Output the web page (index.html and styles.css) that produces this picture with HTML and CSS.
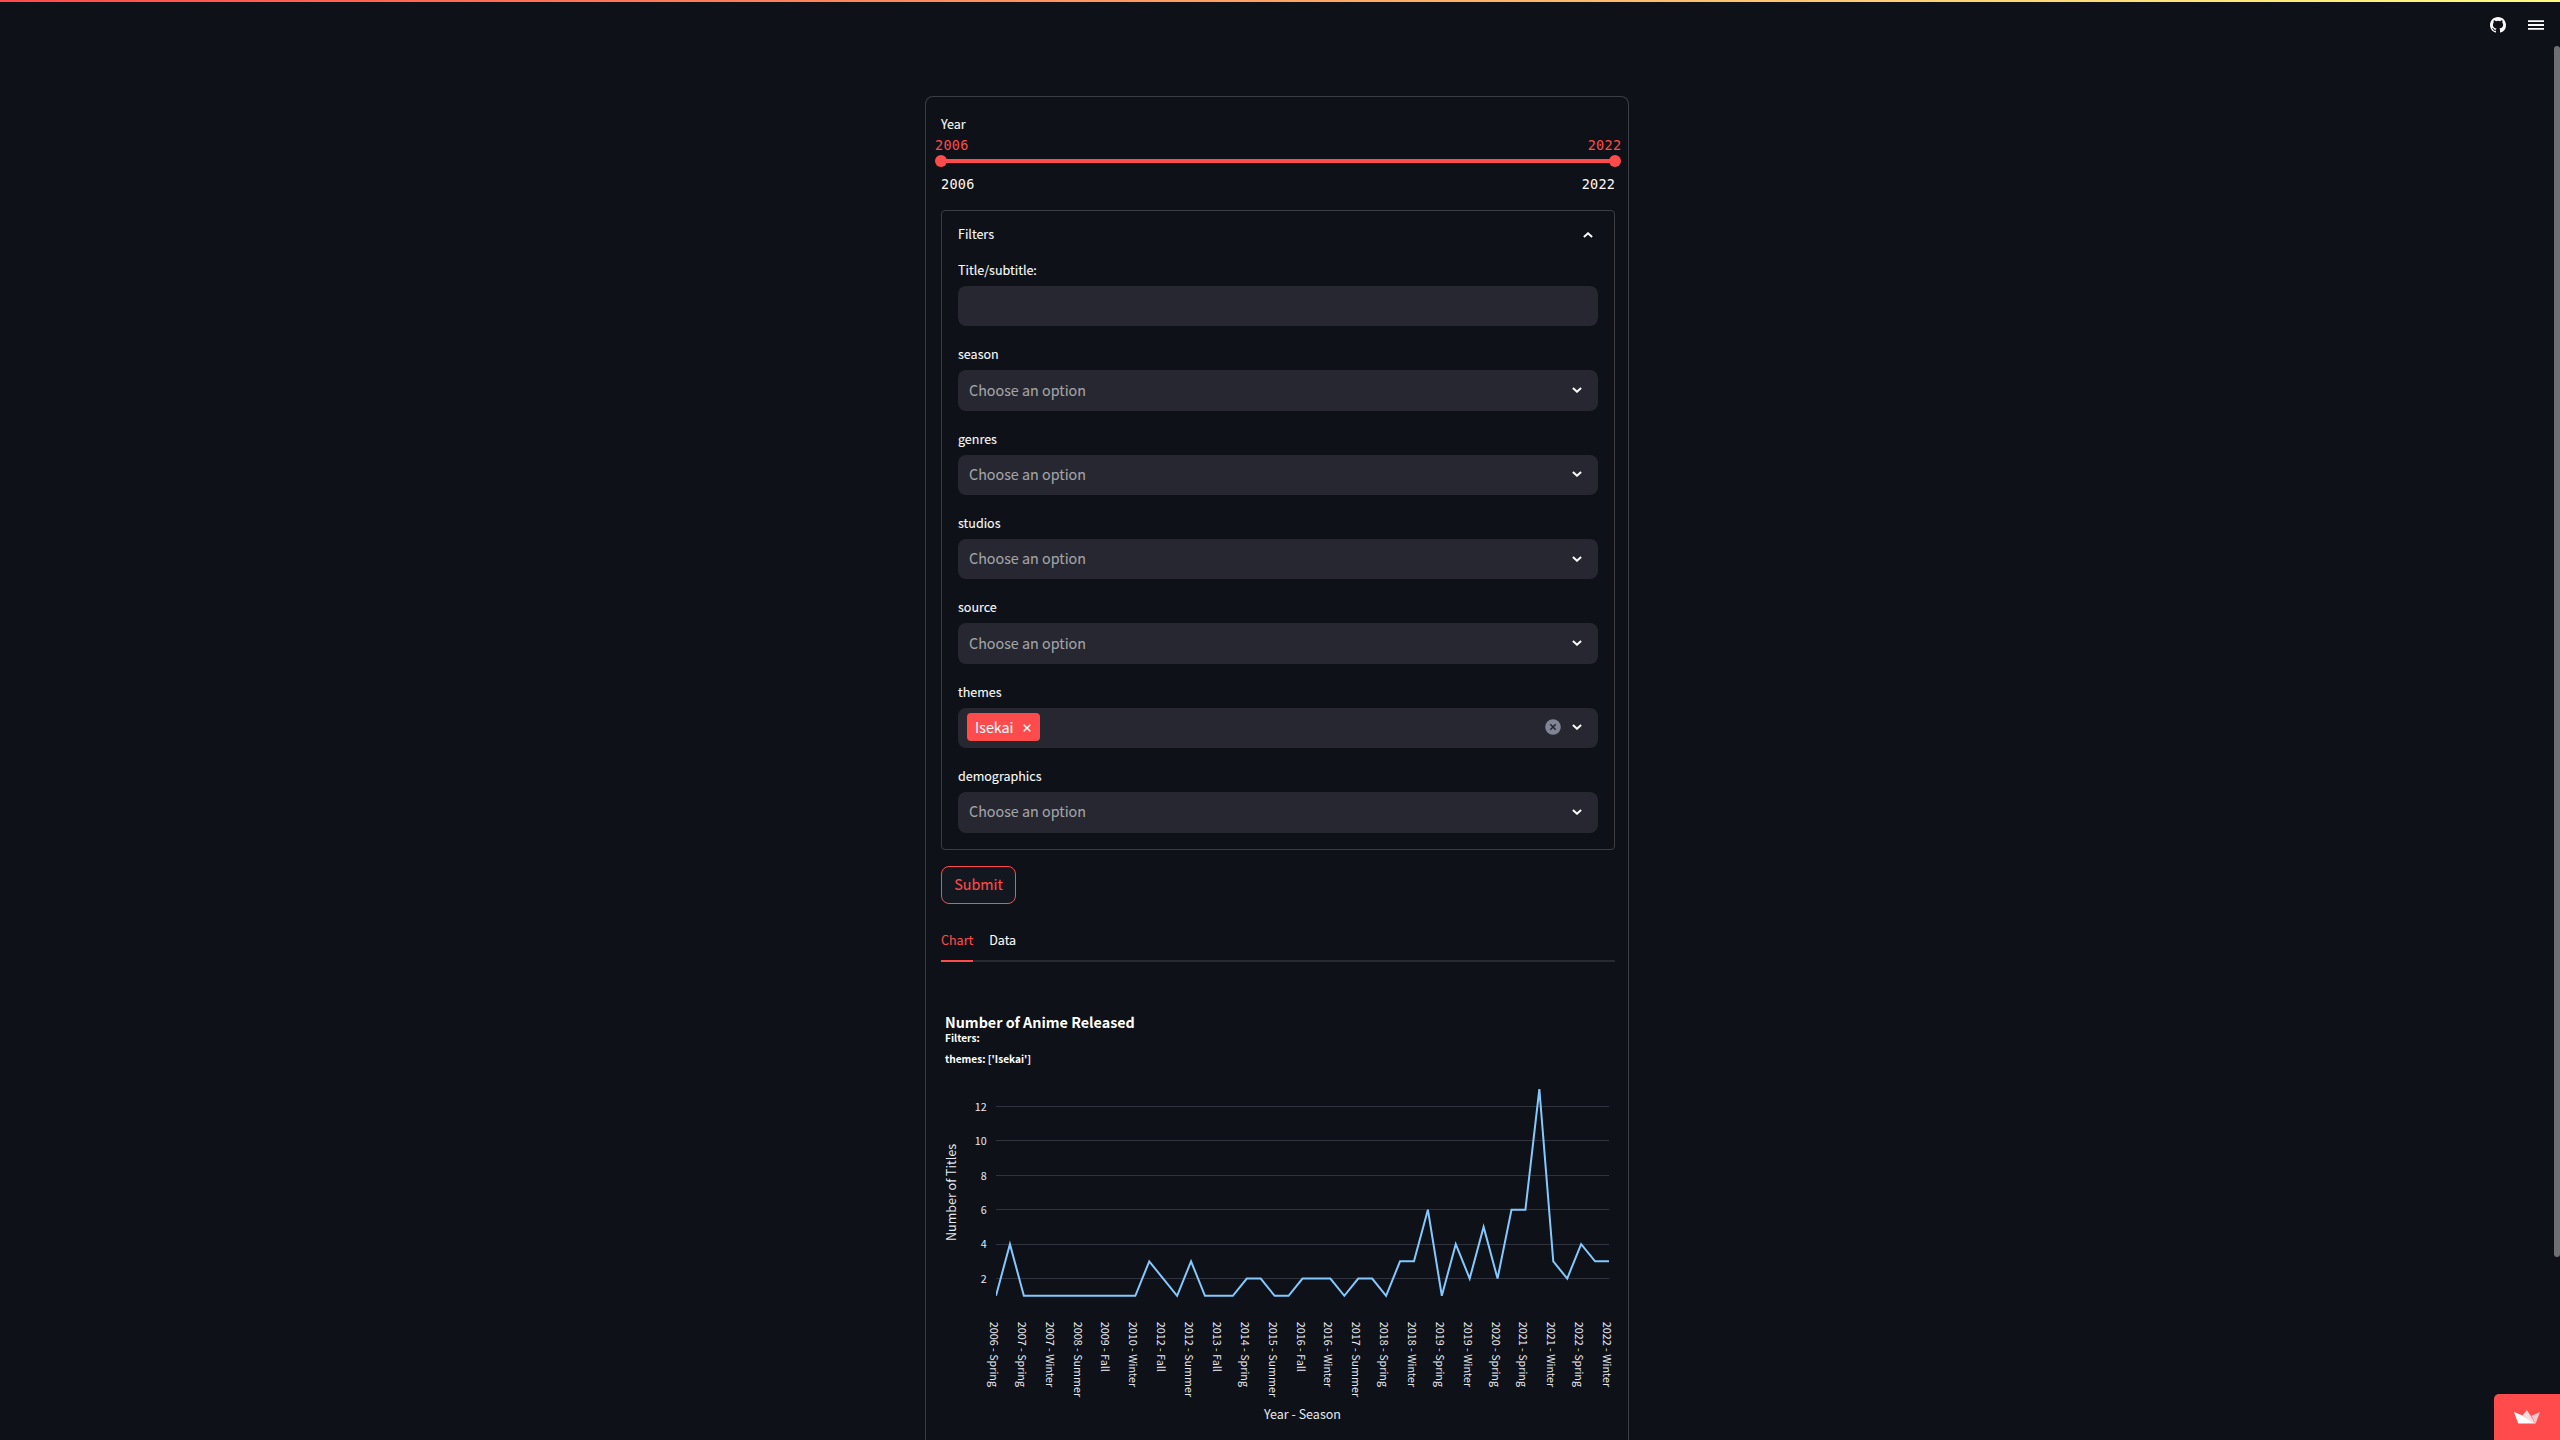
FILE: index.html
```html
<!DOCTYPE html>
<html lang="en">
<head>
<meta charset="utf-8">
<title>Anime Releases</title>
<link rel="stylesheet" href="styles.css">
</head>
<body>
<svg class="defs" aria-hidden="true">
  <symbol id="chevron" viewBox="0 0 10 6"><path d="M.9 .9 5 4.7 9.1 .9" fill="none" stroke="currentColor" stroke-width="2"/></symbol>
</svg>
<div class="decoration"></div>
<header class="toolbar">
  <svg class="github" viewBox="0 0 16 16"><path fill="currentColor" d="M8 0C3.58 0 0 3.58 0 8c0 3.54 2.29 6.53 5.47 7.59.4.07.55-.17.55-.38 0-.19-.01-.82-.01-1.49-2.01.37-2.53-.49-2.69-.94-.09-.23-.48-.94-.82-1.13-.28-.15-.68-.52-.01-.53.63-.01 1.08.58 1.23.82.72 1.21 1.87.87 2.33.66.07-.52.28-.87.51-1.07-1.78-.2-3.64-.89-3.64-3.95 0-.87.31-1.59.82-2.15-.08-.2-.36-1.02.08-2.12 0 0 .67-.21 2.2.82a7.6 7.6 0 0 1 4 0c1.53-1.04 2.2-.82 2.2-.82.44 1.1.16 1.92.08 2.12.51.56.82 1.27.82 2.15 0 3.07-1.87 3.75-3.65 3.95.29.25.54.73.54 1.48 0 1.07-.01 1.93-.01 2.2 0 .21.15.46.55.38A8.01 8.01 0 0 0 16 8c0-4.42-3.58-8-8-8z"/></svg>
  <svg class="menu" viewBox="0 0 16 10"><path fill="currentColor" d="M0 .2h16v1.7H0zM0 4.1h16v1.8H0zM0 8.1h16v1.7H0z"/></svg>
</header>
<div class="view">
  <main class="main">
    <div class="form">
      <section class="slider">
        <div class="label">Year</div>
        <div class="thumb-values"><span>2006</span><span>2022</span></div>
        <div class="track"><i class="thumb"></i><i class="thumb"></i></div>
        <div class="tick-values"><span>2006</span><span>2022</span></div>
      </section>
      <section class="expander">
        <div class="expander-head"><span>Filters</span><svg class="chevron up"><use href="#chevron"/></svg></div>
        <div class="field"><div class="label">Title/subtitle:</div><div class="control"></div></div>
        <div class="field"><div class="label">season</div><div class="control"><span class="placeholder">Choose an option</span><svg class="chevron"><use href="#chevron"/></svg></div></div>
        <div class="field"><div class="label">genres</div><div class="control"><span class="placeholder">Choose an option</span><svg class="chevron"><use href="#chevron"/></svg></div></div>
        <div class="field"><div class="label">studios</div><div class="control"><span class="placeholder">Choose an option</span><svg class="chevron"><use href="#chevron"/></svg></div></div>
        <div class="field"><div class="label">source</div><div class="control"><span class="placeholder">Choose an option</span><svg class="chevron"><use href="#chevron"/></svg></div></div>
        <div class="field"><div class="label">themes</div><div class="control">
          <span class="tag"><span>Isekai</span><svg class="tag-x" viewBox="0 0 8 8"><path d="M.7.7l6.6 6.6M7.3.7.7 7.3" stroke="currentColor" stroke-width="1.5"/></svg></span>
          <svg class="clear" viewBox="0 0 16 16"><circle cx="8" cy="8" r="7.8" fill="#808495"/><path d="M5.3 5.3l5.4 5.4M10.7 5.3l-5.4 5.4" stroke="#262730" stroke-width="1.6"/></svg>
          <svg class="chevron"><use href="#chevron"/></svg></div></div>
        <div class="field"><div class="label">demographics</div><div class="control"><span class="placeholder">Choose an option</span><svg class="chevron"><use href="#chevron"/></svg></div></div>
      </section>
      <button class="submit">Submit</button>
      <nav class="tabs"><span class="tab active">Chart</span><span class="tab">Data</span></nav>
      <svg class="chart" width="674" height="440" viewBox="0 0 674 440">
        <g class="title">
          <text class="heading" x="4" y="28">Number of Anime Released</text>
          <text class="sub" x="4" y="42">Filters:</text>
          <text class="sub" x="4" y="63">themes: ['Isekai']</text>
        </g>
        <path class="grid" d="M55 106.5H668M55 140.5H668M55 175.5H668M55 209.5H668M55 244.5H668M55 278.5H668"/>
        <g class="ticks" text-anchor="end">
          <text x="45.7" y="110.7">12</text><text x="45.7" y="144.7">10</text><text x="45.7" y="179.7">8</text>
          <text x="45.7" y="213.7">6</text><text x="45.7" y="248">4</text><text x="45.7" y="282.7">2</text>
        </g>
        <svg x="55" y="80" width="613" height="250" overflow="hidden">
          <polyline class="line" transform="translate(0 233) scale(13.932 -17.22)" points="0,1 1,4 2,1 10,1 11,3 12,2 13,1 14,3 15,1 17,1 18,2 19,2 20,1 21,1 22,2 24,2 25,1 26,2 27,2 28,1 29,3 30,3 31,6 32,1 33,4 34,2 35,5 36,2 37,6 38,6 39,13 40,3 41,2 42,4 43,3 44,3"/>
        </svg>
        <g class="ticks" transform="translate(49 321.8) rotate(90)">
          <text y="0">2006 - Spring</text>
          <text y="-27.86">2007 - Spring</text>
          <text y="-55.73">2007 - Winter</text>
          <text y="-83.59">2008 - Summer</text>
          <text y="-111.45">2009 - Fall</text>
          <text y="-139.32">2010 - Winter</text>
          <text y="-167.18">2012 - Fall</text>
          <text y="-195.05">2012 - Summer</text>
          <text y="-222.91">2013 - Fall</text>
          <text y="-250.77">2014 - Spring</text>
          <text y="-278.64">2015 - Summer</text>
          <text y="-306.5">2016 - Fall</text>
          <text y="-334.36">2016 - Winter</text>
          <text y="-362.23">2017 - Summer</text>
          <text y="-390.09">2018 - Spring</text>
          <text y="-417.95">2018 - Winter</text>
          <text y="-445.82">2019 - Spring</text>
          <text y="-473.68">2019 - Winter</text>
          <text y="-501.55">2020 - Spring</text>
          <text y="-529.41">2021 - Spring</text>
          <text y="-557.27">2021 - Winter</text>
          <text y="-585.14">2022 - Spring</text>
          <text y="-613">2022 - Winter</text>
        </g>
        <g class="axis-title" text-anchor="middle">
          <text x="361.5" y="419">Year - Season</text>
          <text transform="translate(14.6 192.5) rotate(-90)">Number of Titles</text>
        </g>
      </svg>
    </div>
  </main>
  <div class="scrollbar"><div class="scroll-thumb"></div></div>
</div>
<a class="badge"><svg viewBox="0 0 26 14"><path fill="#fff" d="M0 2 8.5 5.6 21.5 13.6H5.2Q4.4 13.6 4 12.7z"/><path fill="#ffe3e6" d="M8.5 5.6 12.9 .3 21 13.4z"/><path fill="#ffd0d6" d="M12.9.3 17.6 5.9 20 10.5 8.5 5.6z" opacity=".45"/><path fill="#ffc4cb" d="M17.6 5.7 26 2 22 12.8Q21.7 13.6 21 13.6z"/></svg></a>
</body>
</html>
```
FILE: styles.css
```css
* { box-sizing: border-box; }

body {
  margin: 0;
  height: 1440px;
  overflow: hidden;
  display: flex;
  flex-direction: column;
  background: #0e1117;
  color: #fafafa;
  font-family: "Noto Sans CJK SC", "Noto Sans", sans-serif;
  font-size: 12.53px;
  line-height: 20px;
  -webkit-text-stroke: 0.1px currentColor;
}

svg { display: block; flex: none; }
.defs { position: absolute; width: 0; height: 0; }

.decoration {
  height: 2px;
  flex: none;
  background: linear-gradient(90deg, #ff4b4b, #fffd80);
}

.toolbar {
  height: 44px;
  flex: none;
  display: flex;
  justify-content: flex-end;
  align-items: center;
  gap: 22px;
  padding: 3px 16px 0 0;
}
.github { width: 16px; height: 16px; margin-top: -2px; }
.menu { width: 16px; height: 10px; margin-top: -2px; }

.view { display: flex; flex: 1; min-height: 0; }
.main {
  flex: 1;
  display: flex;
  justify-content: center;
  padding-top: 50px;
}
.scrollbar { width: 6px; }
.scroll-thumb { height: 1211px; border-radius: 3px; background: #6e6f73; }

.form {
  width: 704px;
  padding: 17px 13px 0 15px;
  border: 1px solid #3b3d42;
  border-bottom: 0;
  border-radius: 8px 8px 0 0;
}

.slider { height: 96px; }
.slider .label { height: 22px; line-height: 20px; }
.thumb-values, .tick-values {
  display: flex;
  justify-content: space-between;
  font: 13.5px/20px "DejaVu Sans Mono", monospace;
  letter-spacing: 0.26px;
  -webkit-text-stroke: 0;
}
.thumb-values { margin: 0 -6.3px 0 -6px; height: 23px; line-height: 18px; color: #ff4b4b; }
.track {
  display: flex;
  justify-content: space-between;
  align-items: center;
  height: 4px;
  background: #ff4b4b;
}
.thumb { width: 12px; height: 12px; margin: 0 -6px; border-radius: 50%; background: #ff4b4b; }
.tick-values { padding-top: 11px; margin-right: -0.2px; }

.expander {
  height: 640px;
  padding: 0 16px;
  border: 1px solid #3b3d42;
  border-radius: 4px;
}
.expander-head {
  display: flex;
  justify-content: space-between;
  align-items: center;
  height: 48px;
  padding-right: 5px;
}
.expander-head span { padding-bottom: 2px; }
.field { height: 84.36px; }
.field .label { height: 27px; line-height: 21.4px; }
.control {
  display: flex;
  align-items: center;
  height: 40.4px;
  padding: 0 16px 0 11px;
  border-radius: 8px;
  background: #262730;
  font-size: 14.32px;
}
.placeholder { color: #a3a4a8; padding-bottom: 2px; }
.chevron { width: 10px; height: 6px; margin-left: auto; }
.control .chevron { margin-bottom: 1px; }
.chevron.up { transform: rotate(180deg); }
.tag {
  display: flex;
  align-items: center;
  gap: 9.6px;
  height: 28px;
  margin: 0 0 1px -2px;
  padding: 0 8.4px 0 8px;
  border-radius: 4px;
  background: #ff4b4b;
}
.tag span { padding-bottom: 1px; }
.tag-x { width: 8px; height: 8px; margin-top: 1px; }
.clear { width: 16px; height: 16px; margin: 0 0 1px auto; }
.clear + .chevron { margin-left: 11px; }

.submit {
  display: block;
  width: 75px;
  height: 38px;
  margin: 16px 0 0;
  padding: 0 0 2px;
  border: 1px solid #ff4b4b;
  border-radius: 8px;
  background: #131720;
  color: #ff4b4b;
  font: 14.32px/34px "Noto Sans CJK SC", sans-serif;
}

.tabs {
  display: flex;
  gap: 16px;
  height: 42px;
  margin-top: 16px;
  border-bottom: 2px solid #292a2f;
}
.tab { height: 42px; line-height: 39px; }
.tab.active { color: #ff4b4b; border-bottom: 2px solid #ff4b4b; }

.chart { margin-top: 38px; }
.chart text { -webkit-text-stroke: 0; }
.heading { font-size: 14.32px; font-weight: 700; fill: #fff; }
.sub { font-size: 10.1px; font-weight: 700; fill: #fff; }
.grid { fill: none; stroke: #31333f; stroke-width: 1; }
.line { fill: none; stroke: #83c9ff; stroke-width: 2; vector-effect: non-scaling-stroke; }
.ticks { font-size: 10.74px; fill: #e6eaf1; }
.axis-title { font-size: 12.53px; fill: #e6eaf1; }

.badge {
  position: absolute;
  right: 0;
  bottom: 0;
  display: flex;
  justify-content: center;
  align-items: center;
  width: 66px;
  height: 46px;
  border-radius: 5px 0 0 0;
  background: #ff4b4b;
}
.badge svg { width: 26px; height: 14px; }
```
